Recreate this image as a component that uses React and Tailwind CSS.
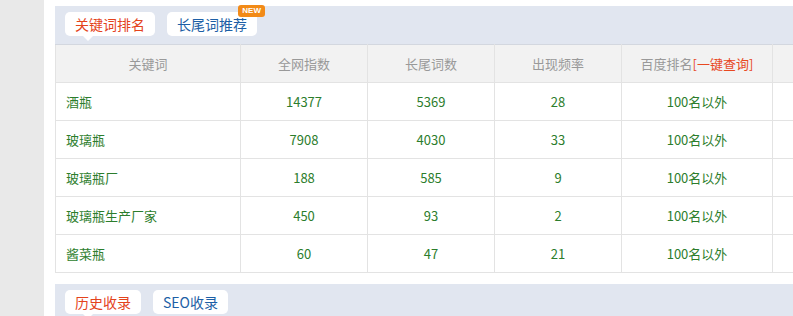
import React from 'react';

const rows = [
  ['酒瓶', '14377', '5369', '28', '100名以外'],
  ['玻璃瓶', '7908', '4030', '33', '100名以外'],
  ['玻璃瓶厂', '188', '585', '9', '100名以外'],
  ['玻璃瓶生产厂家', '450', '93', '2', '100名以外'],
  ['酱菜瓶', '60', '47', '21', '100名以外'],
];

const font = { fontFamily: '"Microsoft YaHei", "Noto Sans CJK SC", "Noto Sans", sans-serif' };

const Tab = ({ children, active, badge }) => (
  <div className="relative">
    <div
      className={`h-[24px] px-[10px] flex items-center bg-white rounded-[5px] text-[14px] ${
        active ? 'text-[#e4431c]' : 'text-[#1d5fa6]'
      }`}
    >
      {children}
    </div>
    {active && (
      <div className="absolute left-[18px] top-[24px] w-0 h-0 border-l-[5px] border-r-[5px] border-t-[5px] border-l-transparent border-r-transparent border-t-white" />
    )}
    {badge && (
      <div className="absolute -right-[8px] -top-[7px] h-[12px] px-[4px] bg-[#f28a17] rounded-[3px] text-white text-[8px] leading-[12px] font-bold" style={{ fontFamily: '"Liberation Sans", sans-serif' }}>
        NEW
      </div>
    )}
  </div>
);

export default function App() {
  return (
    <div className="w-[793px] h-[316px] overflow-hidden flex bg-white" style={font}>
      <div className="w-[44px] shrink-0 bg-[#e9e9e9]" />
      <div className="w-[11px] shrink-0" />
      <div className="flex-1 pt-[6px] min-w-0">
        <div className="w-[760px]">
          <div className="h-[38px] bg-[#e1e6f0] flex items-start gap-[12px] pl-[10px] pt-[6px]">
            <Tab active>关键词排名</Tab>
            <Tab badge>长尾词推荐</Tab>
          </div>
          <table className="border-collapse table-fixed text-[13px]" style={{ width: '760px' }}>
            <colgroup>
              <col style={{ width: 185 }} />
              <col style={{ width: 127 }} />
              <col style={{ width: 127 }} />
              <col style={{ width: 127 }} />
              <col style={{ width: 151 }} />
              <col style={{ width: 43 }} />
            </colgroup>
            <thead>
              <tr className="h-[38px] bg-[#f2f2f2] text-[#999999]">
                <th className="font-normal border border-[#e3e3e3] border-t-[#d3d7df]">关键词</th>
                <th className="font-normal border border-[#e3e3e3] border-t-[#d3d7df]">全网指数</th>
                <th className="font-normal border border-[#e3e3e3] border-t-[#d3d7df]">长尾词数</th>
                <th className="font-normal border border-[#e3e3e3] border-t-[#d3d7df]">出现频率</th>
                <th className="font-normal border border-[#e3e3e3] border-t-[#d3d7df]">
                  百度排名<span className="text-[#e8481f]">[一键查询]</span>
                </th>
                <th className="font-normal border border-[#e3e3e3] border-t-[#d3d7df]" />
              </tr>
            </thead>
            <tbody className="text-[#2c7d2c]">
              {rows.map((r) => (
                <tr key={r[0]} className="h-[38px]">
                  <td className="border border-[#e3e3e3] pl-[10px] text-left">{r[0]}</td>
                  <td className="border border-[#e3e3e3] text-center">{r[1]}</td>
                  <td className="border border-[#e3e3e3] text-center">{r[2]}</td>
                  <td className="border border-[#e3e3e3] text-center">{r[3]}</td>
                  <td className="border border-[#e3e3e3] text-center">{r[4]}</td>
                  <td className="border border-[#e3e3e3]" />
                </tr>
              ))}
            </tbody>
          </table>
          <div className="mt-[11px] h-[40px] bg-[#e1e6f0] flex items-start gap-[12px] pl-[10px] pt-[6px]">
            <Tab active>历史收录</Tab>
            <Tab>SEO收录</Tab>
          </div>
        </div>
      </div>
    </div>
  );
}
